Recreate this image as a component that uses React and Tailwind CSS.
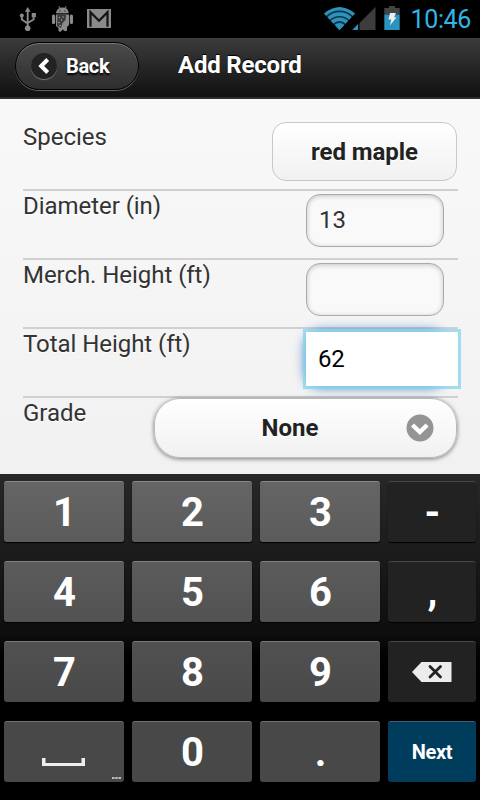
import React from "react";

function StatusBar() {
  return (
    <div className="flex h-[38px] items-start bg-black pl-[19px] pr-[9px]">
      <svg className="mt-[6px] h-[26px] w-[18px]" viewBox="0 0 18 26" fill="none" stroke="#8a8a8a" strokeWidth="1.9">
        <path d="M8.700 4v18M2.800 10v3.500l5.900 4M14.600 9.500v4l-5.900 3.500" />
        <path d="M8.700 1l2.900 4.700H5.800z" fill="#8a8a8a" stroke="none" />
        <circle cx="8.700" cy="22.300" r="2.800" fill="#8a8a8a" stroke="none" />
        <circle cx="2.800" cy="9.500" r="2" fill="#8a8a8a" stroke="none" />
        <rect x="12.700" y="7" width="4.200" height="4.200" fill="#8a8a8a" stroke="none" />
      </svg>
      <svg className="ml-[14px] mt-[6px] h-[27px] w-[24px]" viewBox="0 0 24 27">
        <g fill="#8a8a8a">
          <path d="M5 7.200C5.300 4.500 7 2.800 8.600 2.100L7.300.4l.7-.3 1.500 1.700q2-.5 4 0L15 .1l.7.3-1.300 1.700C16.500 3 17.500 5 17.600 7.200z" />
          <rect x="1" y="8.500" width="3.200" height="9.500" rx="1.500" />
          <rect x="18.800" y="8.500" width="3.200" height="9.500" rx="1.500" />
          <path d="M5 8.500h13V19l-2 2v3.500q-1.500 1.500-3 0l-1.500-1-1.500 2q-1.700.9-2.500-1V22L5 20z" />
        </g>
        <path d="M6.500 9h8.500l-.5 5-3 3-1.500 5-4-2z" fill="#3a3a3a" />
        <g fill="#aaa">
          <circle cx="8.500" cy="11.500" r=".7" /><circle cx="12" cy="11" r=".7" />
          <circle cx="10.500" cy="14" r=".7" /><circle cx="8" cy="16.500" r=".7" />
          <circle cx="9" cy="19.500" r=".7" />
        </g>
        <path d="M8.500 4.500h1v1h-1zM13.500 4.500h1v1h-1z" fill="#000" />
      </svg>
      <svg className="ml-[12px] mt-[9px] h-[19px] w-[24px]" viewBox="0 0 24 19">
        <rect width="24" height="19" fill="#8a8a8a" />
        <path d="M3.500 17.800V3.200l8.500 8.600 8.500-8.600v14.600" fill="none" stroke="#141414" strokeWidth="2.200" />
      </svg>
      <div className="flex-1" />
      <svg className="mt-[6px] h-[25px] w-[52px]" viewBox="0 0 52 25">
        <defs>
          <clipPath id="fan"><path d="M0 7.500Q15.500-5.500 31 7.500L15.500 24.300z" /></clipPath>
        </defs>
        <g clipPath="url(#fan)" fill="none" stroke="#2b93bd" strokeWidth="3.600">
          <rect width="31" height="25" fill="#0b3546" stroke="none" />
          <circle cx="15.500" cy="24" r="21.200" />
          <circle cx="15.500" cy="24" r="15.900" />
          <circle cx="15.500" cy="24" r="10.800" />
          <circle cx="15.500" cy="24" r="3.500" strokeWidth="7" />
        </g>
        <path d="M51.500 1v22.900H28.500z" fill="#3d3d3d" />
        <path d="M34 18v5.900h-5.700z" fill="#2b93bd" />
        <path d="M34.800 15v9" stroke="#000" strokeWidth="1.300" />
      </svg>
      <svg className="ml-[8px] mt-[6px] h-[24px] w-[16px]" viewBox="0 0 16 24">
        <path d="M5 0h6v2h4.700v6.500H.3V2H5z" fill="#434343" />
        <path d="M.3 8.500h15.400V24H.3z" fill="#2b93bd" />
        <path d="M6 7h6l-2 4.300h2.500L6 19.500l1.300-6H4.500z" fill="#eee" />
      </svg>
      <span className="ml-[10px] mt-[5px] text-[25px] leading-[30px] tracking-[-0.35px] text-[#33b5e5]">10:46</span>
    </div>
  );
}

function Header() {
  return (
    <div className="flex h-[61px] items-start border-b-2 border-[#2d2d2d] bg-linear-to-b from-[#3c3c3c] to-[#111111] pl-[15px] text-white">
      <div className="mt-[4px] flex h-[48px] w-[124px] items-center rounded-full border border-black bg-linear-to-b from-[#4b4b4b] to-[#2e2e2e] pl-[15px] shadow-[0_1px_0_#666,inset_0_1px_0_#777]">
        <div className="flex size-[26px] items-center justify-center rounded-full bg-[#222] shadow-[0_1px_1px_#777]">
          <svg className="h-[16px] w-[13px]" viewBox="0 0 13 16" fill="none" stroke="#fff" strokeWidth="4">
            <path d="M9.700 1.500L3.200 8l6.500 6.500" />
          </svg>
        </div>
        <span className="ml-[9px] text-[20px] font-bold leading-6 tracking-[-0.3px] [text-shadow:0_2px_2px_#000]">Back</span>
      </div>
      <span className="ml-[39px] mt-[13px] text-[24px] font-bold leading-[28px] tracking-[-0.2px] [text-shadow:0_-1px_1px_#000]">Add Record</span>
    </div>
  );
}

function Field({ label, children }) {
  return (
    <div className="flex h-[69px] justify-between border-b-2 border-[#d0d0d0]">
      <span className="mt-px tracking-[-0.05px]">{label}</span>
      {children}
    </div>
  );
}

function Form() {
  return (
    <div className="flex h-[375px] flex-col bg-linear-to-b from-[#f9f9f9] to-[#f1f1f1] pl-[23px] pr-[22px] text-[24px] leading-[28px] text-[#333] [text-shadow:0_1px_0_#fff]">
      <div className="flex h-[92px] justify-between border-b-2 border-[#d0d0d0]">
        <span className="mt-[24px]">Species</span>
        <div className="mr-px mt-[23px] flex h-[59px] w-[185px] items-center justify-center rounded-[14px] border border-[#c8c8c8] bg-linear-to-b from-white to-[#f1f1f1] pt-px font-bold text-[#222]">
          <span className="tracking-[-0.05px]">red maple</span>
        </div>
      </div>
      <Field label="Diameter (in)">
        <div className="mr-[14px] mt-[3px] flex h-[53px] w-[138px] items-center rounded-[14px] border border-[#aaa] bg-[#f9f9f9] pb-px pl-[12px] shadow-[inset_0_1px_5px_rgba(0,0,0,0.22)]">13</div>
      </Field>
      <Field label="Merch. Height (ft)">
        <div className="mr-[14px] mt-[3px] h-[53px] w-[138px] rounded-[14px] border border-[#aaa] bg-[#f9f9f9] shadow-[inset_0_1px_5px_rgba(0,0,0,0.22)]" />
      </Field>
      <Field label="Total Height (ft)">
        <div className="relative z-10 -mr-[3px] flex h-[60px] w-[158px]">
          <div className="absolute left-[4px] top-[4px] h-[52px] w-[136px] rounded-[14px] shadow-[0_0_12px_2px_#387bbe]" />
          <div className="relative flex flex-1 items-center border-[3px] border-[#86d4f0]/75 bg-white bg-clip-padding pl-[12px] tracking-[-0.3px] text-black">62</div>
        </div>
      </Field>
      <div className="flex justify-between">
        <span className="mt-px">Grade</span>
        <div className="mr-px flex h-[60px] w-[303px] items-center rounded-[26px] border border-[#bbb] bg-linear-to-b from-white to-[#f1f1f1] pr-[22px] shadow-[0_1px_4px_rgba(0,0,0,0.5)]">
          <span className="flex-1 pl-[19px] text-center font-bold text-[#222]">None</span>
          <svg className="size-[28px]" viewBox="0 0 28 28">
            <circle cx="14" cy="14" r="13.500" fill="#949494" />
            <path d="M6.500 11l7.300 7 7.300-7" fill="none" stroke="#fff" strokeWidth="4.400" />
          </svg>
        </div>
      </div>
    </div>
  );
}

const digitTones = [
  "from-[#656565] to-[#5b5b5b] border-[#878787]",
  "from-[#5b5b5b] to-[#525252] border-[#808080]",
  "from-[#515151] to-[#494949] border-[#787878]",
  "from-[#484848] to-[#484848] border-[#727272]",
];

function Key({ tone, children }) {
  return (
    <div className={"relative flex h-[61px] items-center justify-center rounded-[3px] border-t bg-linear-to-b text-[40px] font-bold leading-none text-white shadow-[0_1px_1px_#000] " + tone}>
      {children}
    </div>
  );
}

const sideTone = "from-[#222] to-[#222] border-[#484848]";

function Keyboard() {
  const digits = [["1", "2", "3"], ["4", "5", "6"], ["7", "8", "9"], ["space", "0", "."]];
  const side = [
    <span className="mt-[2px] pl-px">-</span>,
    <span className="pl-px">,</span>,
    <svg className="h-[20px] w-[40px]" viewBox="0 0 40 20">
      <path d="M0 10L9.500 0H39.500V20H9.500z" fill="#ececec" />
      <path d="M18 4.500l10.500 10.500M28.500 4.500L18 15" stroke="#222" strokeWidth="2.800" strokeLinecap="round" />
    </svg>,
    <span className="text-[20px] tracking-[-0.4px]">Next</span>,
  ];
  return (
    <div className="grid h-[326px] grid-cols-[120px_120px_120px_88px] content-start gap-x-[8px] gap-y-[19px] bg-linear-to-b from-[#282828] via-[#0e0e0e] via-[49%] to-black to-[65%] pl-[4px] pt-[7px]">
      {digits.map((row, r) => (
        <React.Fragment key={r}>
          {row.map((d) => (
            <Key key={d} tone={digitTones[r]}>
              {d === "space" ? (
                <>
                  <svg className="mr-px mt-[19px] h-[8px] w-[43px]" viewBox="0 0 43 8">
                    <path d="M0 0h3.500v5H39.500V0H43v8H0z" fill="#eee" />
                  </svg>
                  <svg className="absolute bottom-[3px] right-[3px] h-[2px] w-[9px]" viewBox="0 0 9 2">
                    <path d="M0 0h2.500v2H0zM3.200 0h2.500v2H3.200zM6.400 0H9v2H6.400z" fill="#bbb" />
                  </svg>
                </>
              ) : (
                <span className="pl-px pt-[2px]">{d}</span>
              )}
            </Key>
          ))}
          <Key tone={r === 3 ? "from-[#003c5c] to-[#003c5c] border-[#375f78]" : sideTone}>{side[r]}</Key>
        </React.Fragment>
      ))}
    </div>
  );
}

export default function App() {
  return (
    <div className="h-[800px] w-[480px] overflow-hidden bg-black font-['Roboto',sans-serif]">
      <StatusBar />
      <Header />
      <Form />
      <Keyboard />
    </div>
  );
}
